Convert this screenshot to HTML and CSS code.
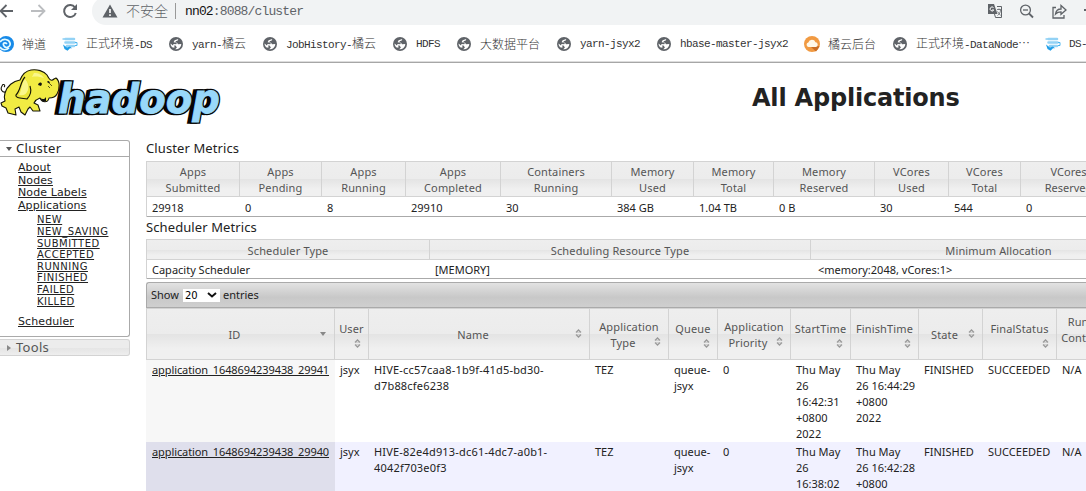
FILE: index.html
```html
<!DOCTYPE html>
<html lang="zh-CN">
<head>
<meta charset="utf-8">
<title>All Applications</title>
<link rel="stylesheet" href="styles.css">
</head>
<body>
<svg class="defs" width="0" height="0">
  <symbol id="globe" viewBox="0 0 14 14"><circle cx="7" cy="7" r="7" fill="#5f6368"/><path d="M9.300 1.900L5.600 3.200 4.600 5.200 7.900 5.600 9 7.300 12.300 6.900A5.300 5.300 0 0 1 6.200 12.300L7.900 10.400 6.600 8.600 3.500 8.300 1.700 6.400A5.500 5.500 0 0 0 1.700 8.100L3 10.300 5.300 10.800 5.600 9.600 4 8.300 4.600 7 7.200 7.200 7.800 6.300 6.800 5.300 6.600 4.200 8.800 3.500z" fill="#fff"/></symbol>
  <symbol id="server" viewBox="0 0 16 14"><path d="M3.500 2h8.500M3.500 5.500h9M5 9h7" stroke="#93d2f5" stroke-width="2.600" stroke-linecap="round"/><path d="M2.500 2H.5M13 5.500h2v3h-2" stroke="#4db5ee" fill="none"/><path d="M1 7.500l1.500 4.500 3 1.800 2.500-2.500h2L8 9.500 5 10.500z" fill="#209ee8"/></symbol>
  <symbol id="sort" viewBox="0 0 7 9"><path d="M1 3.500L3.500 1 6 3.500M1 5.500L3.500 8 6 5.500" fill="none" stroke="#999" stroke-width="1.300"/><path d="M1 3.300h5M1 5.700h5" stroke="#b5b5b5" stroke-width=".6"/></symbol>
</svg>
<header class="browser">
  <div class="address-row">
    <svg class="nav" width="92" height="25" viewBox="0 0 92 25" fill="none" stroke-width="1.800">
      <path d="M13 11H1M6.500 5L.5 11l6 6" stroke="#5f6368"/>
      <path d="M31 11h13M38.500 5l6 6-6 6" stroke="#bbbdc0"/>
      <path d="M75 7.500A6 6 0 1 0 75.800 13" stroke="#5f6368" stroke-width="2"/><path d="M77 4v6h-6z" fill="#5f6368"/>
    </svg>
    <div class="pill">
      <svg width="16" height="14" viewBox="0 0 16 14"><path d="M8 .5L15.500 13.500H.5z" fill="#5f6368"/><path d="M8 5v4M8 10.300v1.700" stroke="#fff" stroke-width="1.600"/></svg>
      <span class="insecure">不安全</span><span class="bar"></span>
      <span class="url"><b>nn02</b>:8088/cluster</span>
      <svg class="tools" width="99" height="24" viewBox="0 0 99 24" fill="none" stroke="#5f6368" stroke-width="1.300">
        <path d="M10 7.500h4.500v11H8.500L7.500 15" stroke-width="1"/><path d="M1 5h6l3.500 10H1z" fill="#5f6368" stroke="none"/><path d="M6.500 8.500a2 2 0 1 0 .3 2.500H5" stroke="#fff" stroke-width="1"/><path d="M10 10.500h4M12 9.500v1M10.500 16.500c2-1.500 3-3.500 3-5.500M10.500 12.500l3 4" stroke-width=".8"/>
        <circle cx="38.500" cy="11" r="4.900"/><path d="M42 14.500l4 4" stroke-width="1.800"/><path d="M36 11h5"/>
        <path d="M69 8.500h-3V19h11v-3M68.500 15c.5-3.500 2.500-5 5.500-5V6.500l5 4.500-5 4.300v-2.500c-2.500 0-4 .6-5.500 2.200z"/>
        <path d="M97 11h2" stroke-width="2"/>
      </svg>
    </div>
  </div>
  <nav class="bookmarks">
    <a style="width:62px"><svg width="15" height="16" viewBox="0 0 15 16"><circle cx="6" cy="8" r="8" fill="#178ae8"/><path d="M0 6c3-4 9-3 10 1s-4 6-6 3 1-4 3-2M0 11c2 4 7 3 9 1" fill="none" stroke="#e4fbff" stroke-width="1.700"/></svg><span class="zh n1">禅道</span></a>
    <a style="width:107px"><svg width="16" height="14"><use href="#server"/></svg><span class="n2"><span class="zh">正式环境</span>-DS</span></a>
    <a style="width:94px"><svg width="14" height="14"><use href="#globe"/></svg><span class="n">yarn-<span class="zh">橘云</span></span></a>
    <a style="width:130px"><svg width="14" height="14"><use href="#globe"/></svg><span class="n">JobHistory-<span class="zh">橘云</span></span></a>
    <a style="width:64px"><svg width="14" height="14"><use href="#globe"/></svg><span class="n">HDFS</span></a>
    <a style="width:100px"><svg width="14" height="14"><use href="#globe"/></svg><span class="n zh">大数据平台</span></a>
    <a style="width:100px"><svg width="14" height="14"><use href="#globe"/></svg><span class="n">yarn-jsyx2</span></a>
    <a style="width:147px"><svg width="14" height="14"><use href="#globe"/></svg><span class="n">hbase-master-jsyx2</span></a>
    <a style="width:89px"><svg width="16" height="16" viewBox="0 0 16 16"><circle cx="8" cy="8" r="8" fill="#f19a42"/><path d="M7 11l5 4.500 3.500-5-3-1z" fill="#c96d25"/><path d="M4.500 11a2.300 2.300 0 0 1-.2-4.500 3.800 3.800 0 0 1 7.200-.2 2.400 2.400 0 0 1 .5 4.700z" fill="#fff8e9"/></svg><span class="n8 zh">橘云后台</span></a>
    <a style="width:152px"><svg width="14" height="14"><use href="#globe"/></svg><span class="n9"><span class="zh">正式环境</span>-DataNode<span class="zh">⋯</span></span></a>
    <a style="width:41px"><svg width="16" height="14"><use href="#server"/></svg><span class="n2">DS-</span></a>
  </nav>
</header>
<div class="banner">
  <svg class="logo" width="222" height="60" viewBox="0 66 222 60">
    <g stroke="#151507" stroke-width="1.100" stroke-linejoin="round">
      <path d="M6 92C2 93 0 89 2 86c1-3 4-1 2 1" fill="none"/>
      <path d="M5 93C7 86 13 81 20 80C22 75 25 71 31 70C37 69 44 71 47 75C49 79 51 82 54 79L56 78C60 81 60 89 57 94C55 98 52 98 49 98C48 103 42 103 40 98C37 99 35 101 34 103L38 105L40 111L33 111L30 107L28 109L25 115L21 112L19 107L15 109L16 115L8 113L6 108L2 106L1 103L5 101C4 98 4 96 5 93Z" fill="#f1eb43"/>
      <path d="M25 77C20 82 21 90 16 95C15 98 21 98 27 99C30 96 32 92 30 86" fill="#eae43a"/>
      <path d="M50 84l2 2M48 86l2 2" fill="none" stroke-width=".7"/>
    </g>
    <path d="M25 79c-4 5-3 11-6 16 4 1 7 0 9-5 1-4 0-8-3-11zM34 73c5 0 8 2 10 5-4-1-8-2-12-1z" fill="#faf78b"/>
    <path d="M38 85c1-3 3-3 4-1l-1 2zM47 82c1-2 3-1 3 2zM40 98c3 2 5 1 6-1v4l-3 1z" fill="#111"/>
    <g transform="translate(54 113)" font-family="DejaVu Sans" font-size="41" font-weight="bold" font-style="italic" stroke-linejoin="miter">
      <text x="1" y="0" textLength="162" lengthAdjust="spacingAndGlyphs" fill="#050505" stroke="#050505" stroke-width="3.500">hadoop</text>
      <text x="4" y="0" textLength="162" lengthAdjust="spacingAndGlyphs" fill="#98d8fa" stroke="#050505" stroke-width="3.600">hadoop</text>
      <text x="4" y="0" textLength="162" lengthAdjust="spacingAndGlyphs" fill="#98d8fa" stroke="#98d8fa" stroke-width=".8">hadoop</text>
    </g>
  </svg>
  <h1>All Applications</h1>
</div>
<div class="page">
  <aside>
    <div class="side-head open"><i class="down"></i><span>Cluster</span></div>
    <div class="side-body">
      <a>About</a><a>Nodes</a><a>Node Labels</a><a>Applications</a>
      <div class="states"><a>NEW</a><a>NEW_SAVING</a><a>SUBMITTED</a><a>ACCEPTED</a><a>RUNNING</a><a>FINISHED</a><a>FAILED</a><a>KILLED</a></div>
      <a>Scheduler</a>
    </div>
    <div class="side-head closed"><i class="right"></i><span>Tools</span></div>
  </aside>
  <main>
    <h2>Cluster Metrics</h2>
    <div class="grid metrics">
      <div class="th">Apps<br>Submitted</div><div class="th">Apps<br>Pending</div><div class="th">Apps<br>Running</div><div class="th">Apps<br>Completed</div><div class="th">Containers<br>Running</div><div class="th">Memory<br>Used</div><div class="th">Memory<br>Total</div><div class="th">Memory<br>Reserved</div><div class="th">VCores<br>Used</div><div class="th">VCores<br>Total</div><div class="th last">VCores<br>Reserved</div>
      <div class="val">29918</div><div class="val">0</div><div class="val">8</div><div class="val">29910</div><div class="val">30</div><div class="val">384 GB</div><div class="val">1.04 TB</div><div class="val">0 B</div><div class="val">30</div><div class="val">544</div><div class="val">0</div>
    </div>
    <h2 class="second">Scheduler Metrics</h2>
    <div class="grid sched">
      <div class="th">Scheduler Type</div><div class="th">Scheduling Resource Type</div><div class="th">Minimum Allocation</div>
      <div class="val">Capacity Scheduler</div><div class="val">[MEMORY]</div><div class="val">&lt;memory:2048, vCores:1&gt;</div>
    </div>
    <div class="toolbar"><span>Show</span><span class="select">20<svg width="10" height="6" viewBox="0 0 10 6"><path d="M1 1l4 3.500L9 1" fill="none" stroke="#111" stroke-width="2"/></svg></span><span>entries</span></div>
    <div class="grid apps">
      <div class="th"><div class="line"><span>ID</span><em><i class="down"></i></em></div></div>
      <div class="th"><span>User</span><div class="line under"><em><svg><use href="#sort"/></svg></em></div></div>
      <div class="th"><div class="line"><span>Name</span><em><svg><use href="#sort"/></svg></em></div></div>
      <div class="th"><span>Application</span><div class="line"><span>Type</span><em><svg><use href="#sort"/></svg></em></div></div>
      <div class="th"><span>Queue</span><div class="line under"><em><svg><use href="#sort"/></svg></em></div></div>
      <div class="th"><span>Application</span><div class="line"><span>Priority</span><em><svg><use href="#sort"/></svg></em></div></div>
      <div class="th"><span>StartTime</span><div class="line under"><em><svg><use href="#sort"/></svg></em></div></div>
      <div class="th"><span>FinishTime</span><div class="line under"><em><svg><use href="#sort"/></svg></em></div></div>
      <div class="th"><div class="line"><span>State</span><em><svg><use href="#sort"/></svg></em></div></div>
      <div class="th"><span>FinalStatus</span><div class="line under"><em><svg><use href="#sort"/></svg></em></div></div>
      <div class="th run"><span>Running<br>Containers</span></div>
      <div class="td id"><a>application_1648694239438_29941</a></div><div class="td">jsyx</div><div class="td name">HIVE-cc57caa8-1b9f-41d5-bd30-<br>d7b88cfe6238</div><div class="td">TEZ</div><div class="td">queue-<br>jsyx</div><div class="td">0</div><div class="td">Thu May<br>26<br>16:42:31<br>+0800<br>2022</div><div class="td">Thu May<br>26 16:44:29<br>+0800<br>2022</div><div class="td">FINISHED</div><div class="td">SUCCEEDED</div><div class="td">N/A</div>
      <div class="td id even"><a>application_1648694239438_29940</a></div><div class="td even">jsyx</div><div class="td even name">HIVE-82e4d913-dc61-4dc7-a0b1-<br>4042f703e0f3</div><div class="td even">TEZ</div><div class="td even">queue-<br>jsyx</div><div class="td even">0</div><div class="td even">Thu May<br>26<br>16:38:02</div><div class="td even">Thu May<br>26 16:42:28<br>+0800</div><div class="td even">FINISHED</div><div class="td even">SUCCEEDED</div><div class="td even">N/A</div>
    </div>
  </main>
</div>
</body>
</html>
```
FILE: styles.css
```css
* { box-sizing: border-box; }
html, body { margin: 0; height: 491px; overflow: hidden; background: #fff; }
body { width: 1086px; font: 11px/16px "Noto Sans", sans-serif; color: #222; }
.defs { position: absolute; }
svg { flex: none; display: block; }
.browser { height: 63px; border-bottom: 1px solid #a6a6a6; box-shadow: inset 0 -1px #ddd; }
.address-row { display: flex; height: 25px; }
.pill { flex: 1; display: flex; align-items: center; height: 28px; margin-top: -3px; padding: 0 0 1px 10px; background: #f1f3f4; border-radius: 14px 0 0 14px; }
.insecure { margin: -2px 0 0 8px; font: 14px/20px "Noto Sans CJK SC", sans-serif; font-weight: 300; color: #5f6368; }
.bar { width: 1px; height: 16px; background: #999; margin: 0 9px 0 7px; }
.url { margin-top: 3px; font: 13px/16px "Liberation Mono", monospace; letter-spacing: -.85px; color: #5f6368; }
.url b { font-weight: 400; color: #111; }
.tools { margin-left: auto; }
.bookmarks { display: flex; height: 37px; overflow: hidden; font: 11px/16px "Liberation Mono", monospace; letter-spacing: -.6px; color: #333; }
.bookmarks a { flex: none; display: flex; align-items: center; white-space: nowrap; }
.zh { font: 12px/16px "Noto Sans CJK SC", sans-serif; font-weight: 300; letter-spacing: 0; }
.n { margin-left: 9px; }
.n1 { margin-left: 7px; }
.n2 { margin-left: 8px; }
.n8 { margin-left: 8px; }
.n9 { margin-left: 9px; }
.banner { display: flex; height: 77px; padding-top: 3px; }
.banner h1 { margin: 18px 0 0 530px; font: bold 24px/28px "DejaVu Sans", sans-serif; letter-spacing: -.2px; white-space: nowrap; }
.page { display: flex; }
aside { flex: none; width: 130px; margin-right: 16px; }
main { flex: 1; min-width: 0; height: 351px; overflow: hidden; }
.side-head { display: flex; align-items: center; font-size: 13px; line-height: 15px; border: 1px solid #aaa; border-left: 0; padding-left: 6px; }
.side-head span { margin: -1px 0 0 4px; letter-spacing: .3px; }
.open { height: 17px; border-radius: 0 3px 0 0; }
.closed { height: 17px; margin-top: 2px; border-color: #d3d3d3; border-radius: 0 3px 3px 0; color: #555; background: linear-gradient(#ececec 50%, #e4e4e4 51%, #eee); }
i.down { border: 3px solid transparent; border-top: 4px solid #555; border-bottom: 0; width: 6px; height: 4px; }
i.right { border: 3px solid transparent; border-left: 4px solid #888; border-right: 0; width: 4px; height: 6px; margin: 0 1px; }
.side-body { height: 180px; padding: 5px 0 0 18px; border: 1px solid #aaa; border-left: 0; border-top: 0; border-radius: 0 0 3px 0; font: 11px/12.600px "DejaVu Sans", sans-serif; letter-spacing: .1px; }
.side-body a, .id a { text-decoration: underline; }
.side-body a { display: block; }
.states { margin: 2px 0 9px 19px; font-size: 10px; line-height: 11.600px; letter-spacing: .5px; }
h2 { margin: 0; height: 21px; font: 13px/17px "Noto Sans", sans-serif; letter-spacing: .1px; }
h2.second { height: 22px; line-height: 21px; }
.grid { display: grid; border-left: 1px solid #d3d3d3; }
.metrics { grid-template-columns: 93px 82px 84px 95px 111px 82px 80px 101px 74px 72px 96px; grid-template-rows: 36px 20px; }
.sched { grid-template-columns: 283px 381px 376px; grid-template-rows: 21px 19px; }
.th { display: flex; flex-direction: column; justify-content: center; text-align: center; color: #555; border: 1px solid #d3d3d3; border-left: 0; background: linear-gradient(#eee 0, #ececec 50%, #e4e4e4 51%, #f0f0f0 80%, #f0f0f0); letter-spacing: .15px; }
.last { letter-spacing: 0; }
.val { padding-left: 5px; line-height: 21px; border-bottom: 1px solid #aaa; white-space: nowrap; }
.sched .val { padding-left: 7px; line-height: 19px; }
.sched .val:nth-child(-n+5) { padding-left: 5px; }
.metrics .th { padding-top: 2px; }
.sched .th { padding-top: 3px; }
.toolbar { display: flex; align-items: center; gap: 4px; height: 26px; margin-top: 3px; padding-left: 4px; border: 1px solid #aaa; border-right: 0; border-radius: 3px 0 0 0; background: linear-gradient(#e2e2e2, #c8c8c8 60%, #cfcfcf); }
.toolbar > :last-child { margin-left: -1px; }
.select { display: flex; align-items: center; justify-content: space-between; width: 37px; height: 13px; padding: 0 3px 0 2px; background: #fff; font: 10px/13px "DejaVu Sans", sans-serif; color: #000; }
.apps { border-left: 0; grid-template-columns: 189px 34px 221px 79px 49px 73px 60px 68px 64px 74px 67px; grid-template-rows: 52px 82px 82px; }
.apps .th { padding-top: 2px; }
.apps .th:first-child { border-left: 1px solid #d3d3d3; }
.line { display: flex; padding: 0 3px 0 7px; }
.line span { flex: 1; }
.line em { display: flex; justify-content: center; width: 16px; padding-top: 2px; margin-left: auto; }
.line em svg { width: 7px; height: 9px; }
.line i.down { margin-top: 3px; border-top-color: #888; }
.under { height: 12px; }
.run { justify-content: flex-start; padding-top: 5px !important; }
.td { padding: 2px 0 0 5px; white-space: nowrap; overflow: hidden; }
.name { letter-spacing: .19px; }
.id { background: #f7f7f7; padding-left: 6px; letter-spacing: -.1px; }
.even { background: #f1f1ff; }
.id.even { background: #dfdfec; }
```
